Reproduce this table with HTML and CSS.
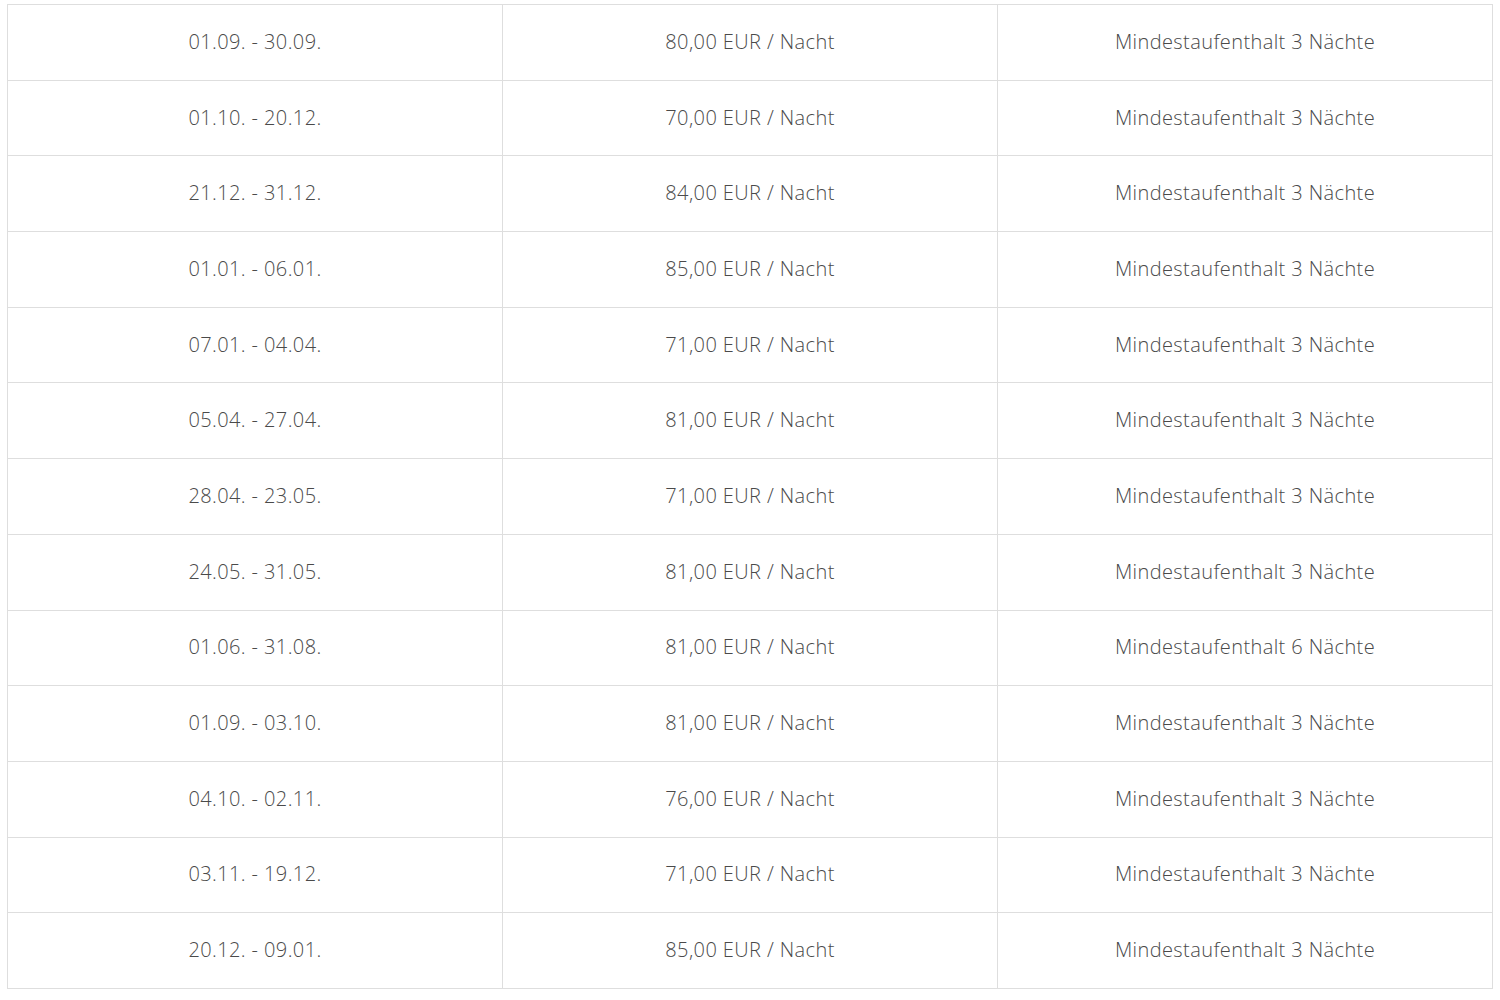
FILE: index.html
```html
<!DOCTYPE html>
<html lang="de">
<head>
<meta charset="utf-8">
<link rel="stylesheet" href="styles.css">
</head>
<body>
<table class="prices">
  <tbody>
    <tr><td>01.09. - 30.09.</td><td>80,00 EUR / Nacht</td><td>Mindestaufenthalt 3 Nächte</td></tr>
    <tr><td>01.10. - 20.12.</td><td>70,00 EUR / Nacht</td><td>Mindestaufenthalt 3 Nächte</td></tr>
    <tr><td>21.12. - 31.12.</td><td>84,00 EUR / Nacht</td><td>Mindestaufenthalt 3 Nächte</td></tr>
    <tr><td>01.01. - 06.01.</td><td>85,00 EUR / Nacht</td><td>Mindestaufenthalt 3 Nächte</td></tr>
    <tr><td>07.01. - 04.04.</td><td>71,00 EUR / Nacht</td><td>Mindestaufenthalt 3 Nächte</td></tr>
    <tr><td>05.04. - 27.04.</td><td>81,00 EUR / Nacht</td><td>Mindestaufenthalt 3 Nächte</td></tr>
    <tr><td>28.04. - 23.05.</td><td>71,00 EUR / Nacht</td><td>Mindestaufenthalt 3 Nächte</td></tr>
    <tr><td>24.05. - 31.05.</td><td>81,00 EUR / Nacht</td><td>Mindestaufenthalt 3 Nächte</td></tr>
    <tr><td>01.06. - 31.08.</td><td>81,00 EUR / Nacht</td><td>Mindestaufenthalt 6 Nächte</td></tr>
    <tr><td>01.09. - 03.10.</td><td>81,00 EUR / Nacht</td><td>Mindestaufenthalt 3 Nächte</td></tr>
    <tr><td>04.10. - 02.11.</td><td>76,00 EUR / Nacht</td><td>Mindestaufenthalt 3 Nächte</td></tr>
    <tr><td>03.11. - 19.12.</td><td>71,00 EUR / Nacht</td><td>Mindestaufenthalt 3 Nächte</td></tr>
    <tr><td>20.12. - 09.01.</td><td>85,00 EUR / Nacht</td><td>Mindestaufenthalt 3 Nächte</td></tr>
  </tbody>
</table>
</body>
</html>
```
FILE: styles.css
```css
html, body {
  margin: 0;
  padding: 0;
  background: #ffffff;
}
body {
  padding: 4px 0 0 7px;
  font-family: "Open Sans", "Liberation Sans", sans-serif;
}
.prices {
  border-collapse: collapse;
  table-layout: fixed;
  width: 1486px;
  height: 985px;
}
.prices td {
  border: 1px solid #dedede;
  text-align: center;
  vertical-align: middle;
  padding: 0 10px 2px;
  font-size: 20px;
  font-weight: 300;
  color: #4a4a4a;
  letter-spacing: 0.4px;
}
```
